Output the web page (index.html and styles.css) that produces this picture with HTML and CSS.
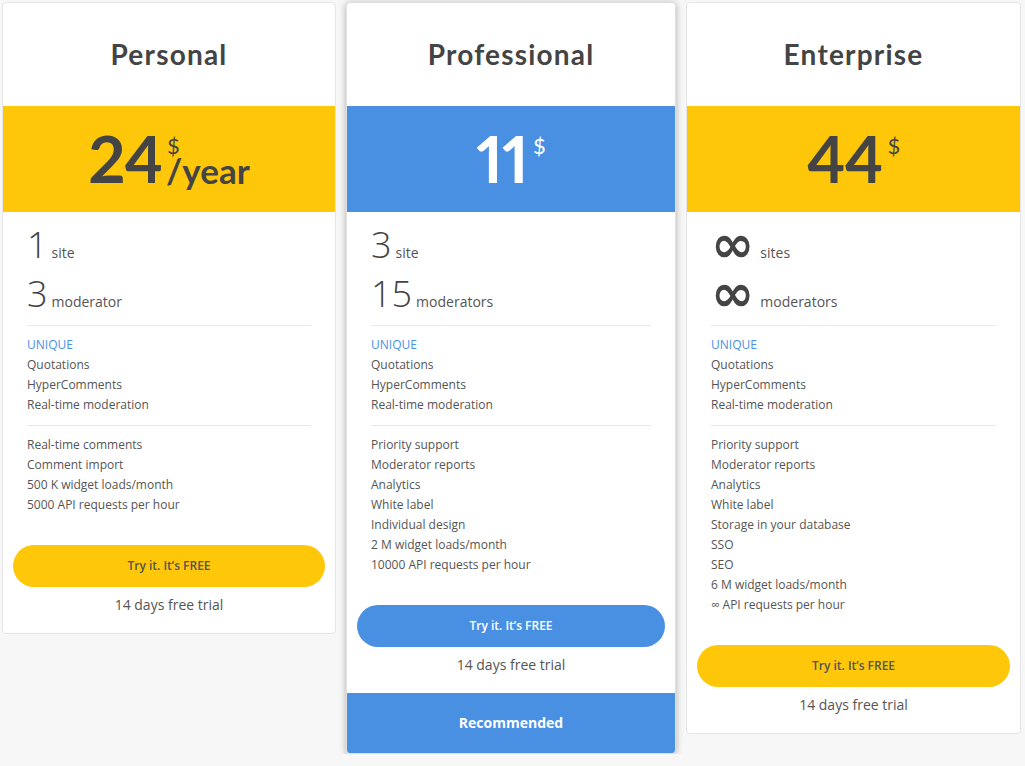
FILE: index.html
```html
<!DOCTYPE html>
<html lang="en">
<head>
    <meta charset="UTF-8">
    <meta name="viewport" content="width=device-width, initial-scale=1.0">
    <title>Pricing</title>
    <link rel="stylesheet" href="styles.css">
</head>
<body>
    <div class="plans">
        <div class="plan">
            <div class="plan-title">Personal</div>
            <div class="price yellow">
                <span class="amount">24</span>
                <span class="unit"><span class="cur">$</span><span class="per">/year</span></span>
            </div>
            <div class="plan-body">
                <div class="limit"><span class="num">1</span><span>site</span></div>
                <div class="limit"><span class="num">3</span><span>moderator</span></div>
                <ul class="features">
                    <li class="unique">UNIQUE</li>
                    <li>Quotations</li>
                    <li>HyperComments</li>
                    <li>Real-time moderation</li>
                </ul>
                <ul class="features">
                    <li>Real-time comments</li>
                    <li>Comment import</li>
                    <li>500 K widget loads/month</li>
                    <li>5000 API requests per hour</li>
                </ul>
            </div>
            <a class="try-btn yellow" href="#">Try it. It’s FREE</a>
            <div class="trial">14 days free trial</div>
        </div>

        <div class="plan featured">
            <div class="plan-title">Professional</div>
            <div class="price blue">
                <span class="amount">11</span>
                <span class="unit"><span class="cur">$</span></span>
            </div>
            <div class="plan-body">
                <div class="limit"><span class="num">3</span><span>site</span></div>
                <div class="limit"><span class="num">15</span><span>moderators</span></div>
                <ul class="features">
                    <li class="unique">UNIQUE</li>
                    <li>Quotations</li>
                    <li>HyperComments</li>
                    <li>Real-time moderation</li>
                </ul>
                <ul class="features">
                    <li>Priority support</li>
                    <li>Moderator reports</li>
                    <li>Analytics</li>
                    <li>White label</li>
                    <li>Individual design</li>
                    <li>2 M widget loads/month</li>
                    <li>10000 API requests per hour</li>
                </ul>
            </div>
            <a class="try-btn blue" href="#">Try it. It’s FREE</a>
            <div class="trial">14 days free trial</div>
            <div class="recommended">Recommended</div>
        </div>

        <div class="plan">
            <div class="plan-title">Enterprise</div>
            <div class="price yellow">
                <span class="amount">44</span>
                <span class="unit"><span class="cur">$</span></span>
            </div>
            <div class="plan-body">
                <div class="limit"><span class="num inf">∞</span><span>sites</span></div>
                <div class="limit"><span class="num inf">∞</span><span>moderators</span></div>
                <ul class="features">
                    <li class="unique">UNIQUE</li>
                    <li>Quotations</li>
                    <li>HyperComments</li>
                    <li>Real-time moderation</li>
                </ul>
                <ul class="features">
                    <li>Priority support</li>
                    <li>Moderator reports</li>
                    <li>Analytics</li>
                    <li>White label</li>
                    <li>Storage in your database</li>
                    <li>SSO</li>
                    <li>SEO</li>
                    <li>6 M widget loads/month</li>
                    <li>∞ API requests per hour</li>
                </ul>
            </div>
            <a class="try-btn yellow" href="#">Try it. It’s FREE</a>
            <div class="trial">14 days free trial</div>
        </div>
    </div>
</body>
</html>
```

FILE: styles.css
```css
body {
    margin: 0;
    background: #f7f7f7;
    font-family: "Open Sans", Arial, sans-serif;
    color: #555;
}
.plans {
    display: grid;
    grid-template-columns: 334px 330px 335px;
    column-gap: 10px;
    align-items: start;
    padding: 2px 2px 0 2px;
}
.plan {
    background: white;
    border: 1px solid #e5e5e5;
    border-radius: 4px;
    overflow: hidden;
    padding-bottom: 18px;
}
.plan.featured {
    border-color: #e0e0e0;
    box-shadow: 0 1px 7px rgba(0,0,0,0.3);
    padding-bottom: 0;
}
.plan-title {
    height: 103px;
    line-height: 103px;
    text-align: center;
    font-family: Lato, sans-serif;
    font-weight: 700;
    font-size: 28px;
    letter-spacing: 1.2px;
    color: #444;
}
.price {
    height: 106px;
    display: flex;
    justify-content: center;
    align-items: flex-start;
    padding-top: 20px;
    box-sizing: border-box;
    font-family: Lato, sans-serif;
    font-weight: 700;
    color: #444;
}
.yellow {
    background: #fec70a;
}
.blue {
    background: #4a90e2;
    color: white;
}
.amount {
    font-size: 65px;
    line-height: 65px;
    letter-spacing: -1px;
    font-variant-numeric: proportional-nums;
}
.unit {
    display: flex;
    flex-direction: column;
    margin-left: 5px;
}
.cur {
    font-size: 22px;
    line-height: 22px;
    height: 27px;
    padding-top: 9px;
    box-sizing: border-box;
    font-weight: 400;
}
.per {
    font-size: 35px;
    line-height: 35px;
    margin-left: -1px;
}
.plan-body {
    padding: 8px 24px 0 24px;
}
.limit {
    display: flex;
    align-items: baseline;
    height: 49px;
    font-size: 14px;
    line-height: 20px;
    color: #555;
}
.num {
    font-size: 36px;
    line-height: 49px;
    font-weight: 300;
    color: #444;
    margin-right: 4px;
}
.num.inf {
    font-family: "DejaVu Sans", sans-serif;
    font-weight: 700;
    font-size: 52px;
    line-height: 41px;
    margin-right: 6px;
    transform: translateY(4px);
}
.features {
    list-style: none;
    margin: 0;
    padding: 9px 0 10px 0;
    border-top: 1px solid #e8e8e8;
    margin-top: 7px;
}
.features + .features {
    margin-top: 0;
}
.features li {
    font-size: 12px;
    line-height: 20px;
    color: #555;
}
.features li.unique {
    color: #4a90e2;
}
.try-btn {
    display: block;
    margin: 20px 10px 0 10px;
    height: 42px;
    line-height: 42px;
    border-radius: 21px;
    text-align: center;
    text-decoration: none;
    font-size: 12px;
    font-weight: 600;
    color: #555;
}
.try-btn.blue {
    color: white;
}
.trial {
    margin-top: 8px;
    text-align: center;
    font-size: 14px;
    line-height: 20px;
    color: #555;
}
.recommended {
    margin-top: 18px;
    height: 60px;
    line-height: 60px;
    background: #4a90e2;
    color: white;
    text-align: center;
    font-size: 14px;
    font-weight: 700;
}
```
